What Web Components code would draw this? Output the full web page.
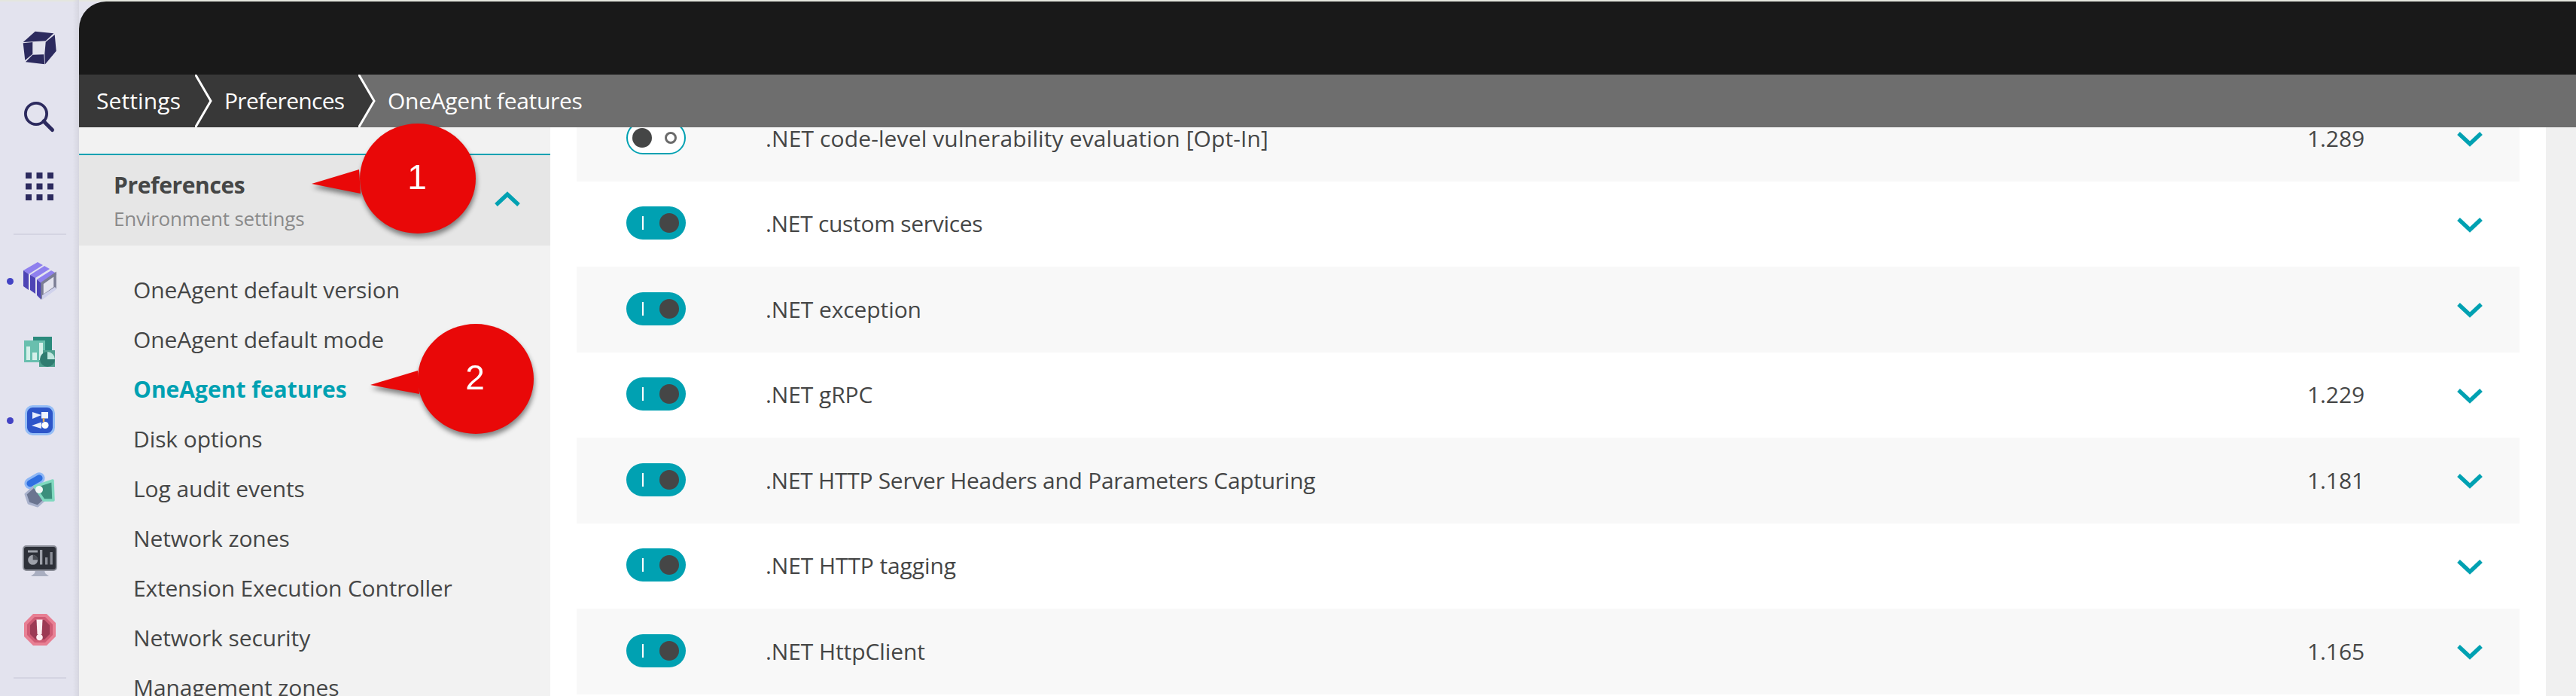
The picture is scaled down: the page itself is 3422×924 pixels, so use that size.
<!DOCTYPE html>
<html><head><meta charset="utf-8">
<style>
html,body{margin:0;padding:0;width:3422px;height:924px;overflow:hidden;background:#fff}
app-shell{font-family:"Open Sans","Liberation Sans",sans-serif}
</style></head>
<body>
<app-shell>
  <icon-rail slot="rail"></icon-rail>
  <top-bar slot="top"></top-bar>
  <bread-crumbs slot="crumbs"><crumb-item style="letter-spacing:.1px">Settings</crumb-item><crumb-item style="letter-spacing:-.7px">Preferences</crumb-item><crumb-item current>OneAgent features</crumb-item></bread-crumbs>
  <side-menu slot="menu" title-text="Preferences" sub-text="Environment settings">
    <menu-link>OneAgent default version</menu-link>
    <menu-link>OneAgent default mode</menu-link>
    <menu-link active>OneAgent features</menu-link>
    <menu-link>Disk options</menu-link>
    <menu-link>Log audit events</menu-link>
    <menu-link>Network zones</menu-link>
    <menu-link style="letter-spacing:-.2px">Extension Execution Controller</menu-link>
    <menu-link>Network security</menu-link>
    <menu-link>Management zones</menu-link>
  </side-menu>
  <feature-list slot="content">
    <feature-row off version="1.289" style="letter-spacing:.12px">.NET code-level vulnerability evaluation [Opt-In]</feature-row>
    <feature-row style="letter-spacing:-.3px">.NET custom services</feature-row>
    <feature-row>.NET exception</feature-row>
    <feature-row version="1.229">.NET gRPC</feature-row>
    <feature-row version="1.181" style="letter-spacing:-.28px">.NET HTTP Server Headers and Parameters Capturing</feature-row>
    <feature-row>.NET HTTP tagging</feature-row>
    <feature-row version="1.165">.NET HttpClient</feature-row>
  </feature-list>
  <call-out slot="over" n="1" style="left:400px;top:150px" tip="14,94" j1="77,75" j2="79,107" cx="155" cy="87"></call-out>
  <call-out slot="over" n="2" style="left:480px;top:420px" tip="12,91" j1="75,72" j2="77,103" cx="152" cy="83"></call-out>
</app-shell>
<script>
function def(name, html, extra){
  const tpl=document.createElement('template');tpl.innerHTML=html;
  customElements.define(name,class extends HTMLElement{
    constructor(){super();this.attachShadow({mode:'open'}).appendChild(tpl.content.cloneNode(true));}
    connectedCallback(){extra&&extra(this,this.shadowRoot);}
  });
}
const chev=(up)=>`<svg width="34" height="22" viewBox="0 0 34 22"><path d="${up?'M2 18 17 4 32 18':'M2 4 17 18 32 4'}" fill="none" stroke="#00a1b2" stroke-width="5.4"/></svg>`;

def('app-shell',`<style>
:host{display:grid;grid-template-columns:105px 626px 1fr;grid-template-rows:99px 70px 755px;width:3422px;height:924px;position:relative;overflow:hidden;background:linear-gradient(#e4e6de 2px,#e3e3ee 2px)}
::slotted([slot=rail]){grid-row:1/4;grid-column:1}
::slotted([slot=top]){grid-row:1;grid-column:2/4}
::slotted([slot=crumbs]){grid-row:2;grid-column:2/4;z-index:2}
::slotted([slot=menu]){grid-row:3;grid-column:2}
::slotted([slot=content]){grid-row:3;grid-column:3}
</style><slot name="rail"></slot><slot name="top"></slot><slot name="crumbs"></slot><slot name="menu"></slot><slot name="content"></slot><slot name="over"></slot>`);

def('top-bar',`<style>:host{display:block;background:#191919;border-top-left-radius:36px;margin-top:2px}</style>`);

def('icon-rail',`<style>
:host{display:flex;flex-direction:column;align-items:center;background:linear-gradient(90deg,transparent 0,transparent 92%,#d6d6e0 100%);width:105px;height:924px;box-sizing:border-box;padding-top:40px}
.i{width:48px;height:48px;display:flex;align-items:center;justify-content:center;position:relative;flex:none}
.d::before{content:"";position:absolute;left:-20px;top:19.500px;width:9px;height:9px;border-radius:50%;background:#4343c4}
hr{border:0;height:2px;background:#d4d4e2;width:70px;flex:none;margin:0}
svg{display:block;overflow:visible;flex:none}
</style>
<div class="i"><svg width="46" height="46" viewBox="0 0 46 46"><path fill="#2c2a5e" d="M.7 15 16.700 .7 41.300 3.300 30.700 13.300 12.700 14.300ZM.7 16.300 13.300 15V30.700L3.300 39ZM4 41.300 13.300 31.700 28.300 31.300 29.300 44.300ZM42.700 5 44.700 26.700 30 44.300 29.300 30.700 30.700 14.700Z"/></svg></div>
<div class="i" style="margin-top:43px"><svg width="40" height="40" viewBox="0 0 40 40" style="margin-left:-2px"><circle cx="16" cy="16" r="14.100" fill="none" stroke="#2c2a5e" stroke-width="3.800"/><path d="M26 26 37.500 37.500" stroke="#2c2a5e" stroke-width="5" stroke-linecap="round"/></svg></div>
<div class="i" style="margin-top:45px"><svg width="38" height="38" viewBox="0 0 38 38"><g fill="#2c2a5e"><rect x="0" y="0" width="8" height="8"/><rect x="14.500" y="0" width="8" height="8"/><rect x="29" y="0" width="8" height="8"/><rect x="0" y="14.500" width="8" height="8"/><rect x="14.500" y="14.500" width="8" height="8"/><rect x="29" y="14.500" width="8" height="8"/><rect x="0" y="29" width="8" height="8"/><rect x="14.500" y="29" width="8" height="8"/><rect x="29" y="29" width="8" height="8"/></g></svg></div>
<hr style="margin-top:38px">
<div class="i d" style="margin-top:37px"><svg width="44" height="50" viewBox="0 0 44 50"><path fill="#8f80ee" d="M0 11 19 0 26 4 7 16ZM9 17 28 5 35 9 16 21ZM18 23 37 11 44 15 44 17 24 28Z"/><path fill="#4d44b5" d="M0 11 7 16 7 37 0 32ZM9 17 16 21 16 42 9 37ZM18 23 24 28 24 50 18 44Z"/><path fill="none" stroke="#7b7d94" stroke-width="3.500" d="M42 16 25 28 25 46 42 34Z"/><path fill="#d0d2ec" d="M25 44 42 33 44 36 25 50Z"/></svg></div>
<div class="i" style="margin-top:46px"><svg width="44" height="42" viewBox="0 0 44 42"><rect x="13" y="1" width="25" height="22" fill="#2b8a7c"/><rect x="1" y="6" width="28" height="29" fill="#69bfae"/><rect x="21" y="19" width="21" height="22" fill="#4fa08f"/><rect x="4" y="14" width="5" height="18" fill="#d5f0ea"/><rect x="12" y="22" width="6" height="10" fill="#d5f0ea"/><rect x="21" y="9" width="5" height="23" fill="#d5f0ea"/><circle cx="32" cy="31" r="10" fill="#2f7c70"/><path d="M32 21a10 10 0 0 1 10 10H32Z" fill="#bfe8df"/></svg></div>
<div class="i d" style="margin-top:43px"><svg width="40" height="40" viewBox="0 0 40 40"><rect x="1.500" y="1.500" width="37" height="37" rx="9" fill="#2d55c9" stroke="#94bdf6" stroke-width="3"/><path d="M10 9 22 13 10 18Z" fill="#e8eefc"/><rect x="22" y="9" width="9" height="8.500" fill="#eef3ff"/><path d="M25 17V22" fill="none" stroke="#e0a95a" stroke-width="2.500"/><path d="M22 22.500 9 27 22 31Z" fill="#e8eefc"/><circle cx="27" cy="26.500" r="4.600" fill="#fff"/></svg></div>
<div class="i" style="margin-top:44px"><svg width="42" height="46" viewBox="0 0 42 46"><rect x="1" y="5.300" width="26" height="12" rx="6" transform="rotate(-30 14 11.300)" fill="#2f6fe0" stroke="#8db6f5" stroke-width="3"/><path d="M2 29 13 19 28 36 18 45 6 41Z" fill="#6b7590" stroke="#a9b2cc" stroke-width="3" stroke-linejoin="round"/><path d="M14 19 38 11 39 37 26 37Z" fill="#3b8f7c" stroke="#7fd9bf" stroke-width="3.500" stroke-linejoin="round"/><circle cx="20" cy="23" r="5" fill="#f2f7f6"/></svg></div>
<div class="i" style="margin-top:46.500px"><svg width="46" height="42" viewBox="0 0 46 42"><path d="M17 33h12l1 4 5 4H11l5-4Z" fill="#a9aec0"/><rect x="1" y="1" width="44" height="32" rx="4" fill="#2d3038" stroke="#8a8d97" stroke-width="2"/><rect x="7" y="6.500" width="13" height="3" fill="#9ea1aa"/><circle cx="13.700" cy="19.300" r="6.500" fill="#9ea1aa"/><path d="M13.700 19.300V12.800a6.500 6.500 0 0 1 6.500 6.500Z" fill="#4a4d55"/><rect x="23" y="6" width="3.300" height="19.500" fill="#9ea1aa"/><rect x="30" y="16" width="3.300" height="9.500" fill="#8b8e97"/><rect x="36.500" y="9" width="3.300" height="16.500" fill="#8b8e97"/></svg></div>
<div class="i" style="margin-top:43px"><svg width="44" height="44" viewBox="0 0 44 44"><path d="M13 1H31L43 13V31L31 43H13L1 31V13Z" fill="#e87f93"/><path d="M15 5H29L39 15V29L29 39H15L5 29V15Z" fill="#cf5b74"/><path d="M16 9H28L35 16V28L28 35H16L9 28V16Z" fill="#9c3a54"/><path d="M17.500 8.500h8L24.500 28h-6Z" fill="#fdeff2"/><circle cx="21.500" cy="32" r="4.300" fill="#fdeff2"/></svg></div>
<hr style="margin-top:39.500px">
`);

def('bread-crumbs',`<style>:host{display:flex;align-items:stretch;background:#6e6e6e;height:70px;font-size:30px;letter-spacing:-.3px;color:#fff}</style><slot></slot>`);
def('crumb-item',`<style>
:host{display:flex;align-items:center;position:relative;background:#383838;flex:none;height:70px;padding-left:23px;padding-right:21px;line-height:40px}
:host(:nth-child(1)){width:156px;box-sizing:border-box}
:host(:nth-child(2)){width:217px;box-sizing:border-box;padding-left:37px}
:host([current]){background:#6e6e6e;padding-left:37px}
svg{position:absolute;top:0;right:-22px;z-index:1}
:host([current]) svg{display:none}
</style><slot></slot><svg width="24" height="70" viewBox="0 0 24 70"><path d="M0 -1 21 35 0 71Z" fill="#383838"/><path d="M0 -1 21 35 0 71" fill="none" stroke="#fff" stroke-width="3"/></svg>`);

def('side-menu',`<style>
:host{display:block;background:#f2f2f2;position:relative;height:755px;overflow:hidden;padding-top:35px;box-sizing:border-box;color:#454646}
header{border-top:2px solid #00a1b2;background:#e6e6e6;height:122px;box-sizing:border-box;padding:20px 46px;display:flex;justify-content:space-between;align-items:flex-start;position:relative}
b{display:block;font-size:30px;letter-spacing:-.4px;line-height:40px;font-weight:700;color:#454646}
span{display:block;font-size:26px;letter-spacing:-.2px;line-height:36px;margin-top:6px;color:#8a8a8a}
.ch{position:absolute;right:40px;top:48px}
nav{padding-top:26px;display:flex;flex-direction:column}
</style><header><div><b id="t"></b><span id="s"></span></div><div class="ch">${chev(true)}</div></header><nav><slot></slot></nav>`,(el,r)=>{r.getElementById('t').textContent=el.getAttribute('title-text');r.getElementById('s').textContent=el.getAttribute('sub-text');});
def('menu-link',`<style>:host{display:flex;align-items:center;height:66px;padding-left:72px;font-size:30px;letter-spacing:-.1px;line-height:34px;color:#454646}
:host([active]){color:#00a1b2;font-weight:700;letter-spacing:0}</style><slot></slot>`);

def('feature-list',`<style>:host{display:block;position:relative;height:755px;overflow:hidden;padding:0 35px;background:linear-gradient(90deg,#fff 0,#fff 2651px,#f0f0f0 2651px)}
.w{margin-top:-42px;width:2581px}
::slotted(feature-row:nth-child(odd)){background:#f8f8f8}
</style><div class="w"><slot></slot></div>`);
def('feature-row',`<style>
:host{display:grid;grid-template-columns:251px 1fr 150px 132px;align-items:center;height:113.500px;font-size:30px;letter-spacing:-.1px;line-height:28px;color:#454646;box-sizing:border-box}
.sw{margin:-2px 0 0 66px;width:79px;height:44px;border-radius:22px;background:#00a1b2;position:relative;box-sizing:border-box}
.sw i{position:absolute;left:21px;top:13px;width:2px;height:18px;background:#fff}
.sw u{position:absolute;left:44px;top:9px;width:26px;height:26px;border-radius:50%;background:#454646}
:host([off]) .sw{background:#fff;border:2px solid #00a1b2}
:host([off]) .sw i{left:49px;top:12px;width:10px;height:10px;border:3px solid #6b6b6b;border-radius:50%;background:#fff}
:host([off]) .sw u{left:6px;top:7px}
#v{letter-spacing:-.1px}
.c{display:flex;padding-left:49px;margin-top:1px}
</style><div class="sw"><i></i><u></u></div><div><slot></slot></div><div id="v"></div><div class="c">${chev(false)}</div>`,(el,r)=>{r.getElementById('v').textContent=el.getAttribute('version')||'';});

def('call-out',`<style>:host{position:absolute;display:block;width:240px;height:170px;z-index:5;filter:drop-shadow(1px 5px 3px rgba(0,0,0,.45))}
svg{display:block;overflow:visible}
text{font-family:"Liberation Sans",sans-serif;font-size:46px;fill:#fff;text-anchor:middle;dominant-baseline:central}
</style><svg width="240" height="170"><ellipse id="e" rx="77" ry="73" fill="#e90808"/><polygon id="p" fill="#e90808"/><text id="n"></text></svg>`,(el,r)=>{
 const cx=+el.getAttribute('cx'),cy=+el.getAttribute('cy');
 const e=r.getElementById('e');e.setAttribute('cx',cx);e.setAttribute('cy',cy);
 r.getElementById('p').setAttribute('points',[el.getAttribute('tip'),el.getAttribute('j1'),el.getAttribute('j2')].join(' '));
 const n=r.getElementById('n');n.setAttribute('x',cx-1);n.setAttribute('y',cy-2);n.textContent=el.getAttribute('n');
});
</script>
</body></html>
